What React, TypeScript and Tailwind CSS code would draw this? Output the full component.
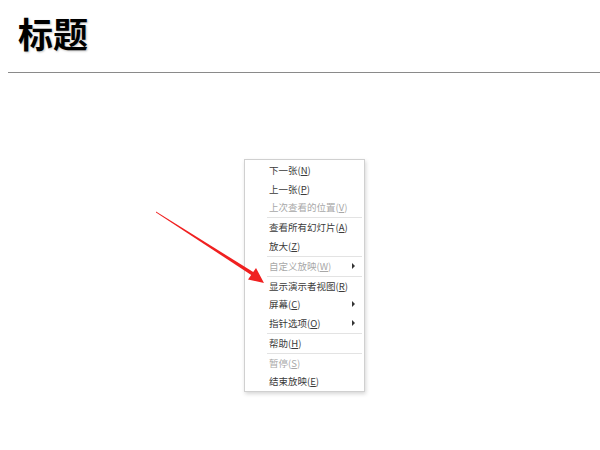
import React from 'react';

type Item = { label: string; key: string; disabled?: boolean; sub?: boolean; sepBefore?: boolean };

const items: Item[] = [
  { label: '下一张', key: 'N' },
  { label: '上一张', key: 'P' },
  { label: '上次查看的位置', key: 'V', disabled: true },
  { label: '查看所有幻灯片', key: 'A', sepBefore: true },
  { label: '放大', key: 'Z' },
  { label: '自定义放映', key: 'W', disabled: true, sub: true, sepBefore: true },
  { label: '显示演示者视图', key: 'R', sepBefore: true },
  { label: '屏幕', key: 'C', sub: true },
  { label: '指针选项', key: 'O', sub: true },
  { label: '帮助', key: 'H', sepBefore: true },
  { label: '暂停', key: 'S', disabled: true, sepBefore: true },
  { label: '结束放映', key: 'E' },
];

const App = () => {
  return (
    <div className="relative w-[600px] h-[450px] bg-white overflow-hidden font-['Noto_Sans_CJK_SC',sans-serif]">
      {/* Title */}
      <div className="ml-2 border-b-[1.5px] border-[#8a8a8a] h-[73px]">
        <h1 className="pl-[10px] pt-[11px] text-[35px] leading-[44px] font-bold text-black [text-shadow:1px_1px_2px_rgba(0,0,0,0.25)]">
          标题
        </h1>
      </div>

      {/* Context menu */}
      <div className="absolute left-[244px] top-[159px] w-[121px] pt-px bg-white border border-[#d0d0d0] shadow-[1px_2px_4px_rgba(0,0,0,0.16)]">
        {items.map((it) => (
          <div key={it.key}>
            {it.sepBefore && <div className="ml-[22px] mr-[2px] h-px mt-[0.5px] bg-[#e3e3e3]" />}
            <div
              className={`relative flex items-center h-[18.5px] pl-[24px] text-[9.5px] ${
                it.disabled ? 'text-[#a8a8a8]' : 'text-[#3a3a3a]'
              }`}
            >
              <span>
                {it.label}(<span className="underline">{it.key}</span>)
              </span>
              {it.sub && (
                <span className="absolute right-[9px] top-1/2 -translate-y-1/2 w-0 h-0 border-y-[3px] border-y-transparent border-l-[3px] border-l-[#333]" />
              )}
            </div>
          </div>
        ))}
      </div>

      {/* Red arrow */}
      <svg className="absolute left-0 top-0" width="600" height="450" viewBox="0 0 600 450">
        <polygon points="156,211.6 254,272.5 252,275.5 156,212.4" fill="#f02020" />
        <polygon points="264,283 248,279.5 256,268" fill="#f02020" />
      </svg>
    </div>
  );
};

export default App;
